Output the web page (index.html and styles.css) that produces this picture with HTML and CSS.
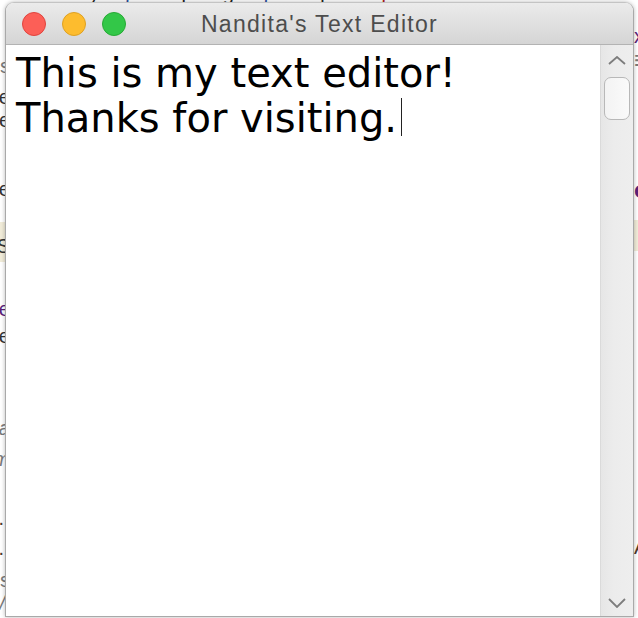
FILE: index.html
```html
<!DOCTYPE html>
<html>
<head>
<meta charset="utf-8">
<title>Nandita's Text Editor</title>
<link rel="stylesheet" href="styles.css">
</head>
<body>
<div class="desktop">
  <div class="bg-top">
    <div class="bg-top-line">n<span class="gap1"></span>y<span class="gap2"></span><span class="blue">j</span><span class="gap3"></span>p<span class="gap4"></span>g<span class="gap5"></span><span class="blue">j</span><span class="gap6"></span>p<span class="gap7"></span><span class="red">j</span></div>
  </div>
  <div class="bg-sides">
    <div class="strip-left">
      <div class="ln l1 gray">is</div>
      <div class="ln l2">the</div>
      <div class="ln l3">are</div>
      <div class="ln l4">one</div>
      <div class="ln l5 hl">IS</div>
      <div class="ln l6 purple">me</div>
      <div class="ln l7">the</div>
      <div class="ln l8 gray it">na</div>
      <div class="ln l9 gray it">om</div>
      <div class="ln l10 brown">.</div>
      <div class="ln l11 brown">.</div>
      <div class="ln l12 gray">s</div>
      <div class="ln l13 gray it">/</div>
    </div>
    <div class="strip-right">
      <div class="rn r1 purple">x</div>
      <div class="rn r2 gray">≡</div>
      <div class="rn r4 purple bold">o</div>
      <div class="rn r5 hl">&nbsp;</div>
      <div class="rn r6 brown">A</div>
    </div>
  </div>

  <div class="window">
    <div class="titlebar">
      <div class="lights">
        <span class="light red-l"></span>
        <span class="light yellow-l"></span>
        <span class="light green-l"></span>
      </div>
      <div class="title">Nandita's Text Editor</div>
      <div class="spacer"></div>
    </div>
    <div class="content">
      <div class="editor">
        <div class="line">This is my text editor!</div>
        <div class="line">Thanks for visiting.<span class="caret"></span></div>
      </div>
      <div class="scrollbar">
        <svg class="chev up" width="18" height="9" viewBox="0 0 18 9"><polyline points="1,8 9,1 17,8" fill="none" stroke="#7d7d7d" stroke-width="1.8"/></svg>
        <div class="thumb"></div>
        <div class="track-fill"></div>
        <svg class="chev down" width="18" height="10" viewBox="0 0 18 10"><polyline points="1,1 9,9 17,1" fill="none" stroke="#7d7d7d" stroke-width="1.8"/></svg>
      </div>
    </div>
  </div>
</div>
</body>
</html>
```

FILE: styles.css
```css
html, body {
  margin: 0;
  padding: 0;
  background: #fff;
}

.desktop {
  position: relative;
  width: 638px;
  height: 618px;
  overflow: hidden;
  background: #ffffff;
  display: flex;
  flex-direction: column;
  font-family: "Liberation Sans", Arial, sans-serif;
}

.bg-top {
  height: 3px;
  overflow: hidden;
  flex: none;
}

.bg-top-line {
  margin-top: -17px;
  font-size: 20px;
  line-height: 20px;
  white-space: nowrap;
  color: #222;
  display: flex;
}

.gap1 { width: 78px; }
.gap2 { width: 26px; }
.gap3 { width: 52px; }
.gap4 { width: 30px; }
.gap5 { width: 30px; }
.gap6 { width: 52px; }
.gap7 { width: 50px; }

.blue { color: #2a4fa0; }
.red { color: #b02020; }

.bg-sides {
  flex: 1;
  display: flex;
  justify-content: space-between;
}

.strip-left {
  width: 10px;
  display: flex;
  flex-direction: column;
  overflow: hidden;
}

.strip-right {
  width: 4px;
  display: flex;
  flex-direction: column;
  overflow: hidden;
}

.ln {
  display: flex;
  justify-content: flex-end;
  white-space: nowrap;
  font-size: 20px;
  line-height: 20px;
  height: 20px;
  color: #333;
  flex: none;
}

.rn {
  display: flex;
  justify-content: flex-start;
  white-space: nowrap;
  font-size: 20px;
  line-height: 20px;
  height: 20px;
  color: #333;
  flex: none;
}

.gray { color: #7a7a7a; }
.purple { color: #5b1f7a; }
.brown { color: #4e3a2c; }
.it { font-style: italic; }
.bold { font-weight: bold; font-size: 24px; }
.hl { background: #f1ecd9; }

.l1 { margin-top: 53px; }
.l2 { margin-top: 11px; }
.l3 { margin-top: 3px; }
.l4 { margin-top: 49px; }
.l5 { margin-top: 23px; height: 20px; padding: 14px 0 6px; }
.l6 { margin-top: 37px; }
.l7 { margin-top: 7px; }
.l8 { margin-top: 72px; }
.l9 { margin-top: 11px; }
.l10 { margin-top: 39px; padding-right: 6px; }
.l11 { margin-top: 10px; padding-right: 6px; }
.l12 { margin-top: 12px; }
.l13 { margin-top: 3px; padding-right: 5px; }

.r1 { margin-top: 23px; }
.r2 { margin-top: 4px; font-size: 26px; }
.r4 { margin-top: 110px; }
.r5 { margin-top: 20px; height: 31px; }
.r6 { margin-top: 286px; }

/* window */
.window {
  position: absolute;
  left: 5px;
  top: 2px;
  width: 629px;
  height: 615px;
  box-sizing: border-box;
  border: 1px solid #a9a9a9;
  border-top-color: #c4c4c4;
  border-radius: 9px 9px 0 0;
  background: #fff;
  display: flex;
  flex-direction: column;
  overflow: hidden;
  box-shadow: 0 0 4px rgba(0, 0, 0, 0.28);
}

.titlebar {
  flex: none;
  height: 42px;
  box-sizing: border-box;
  border-bottom: 1px solid #b3b3b3;
  background: linear-gradient(#ebebeb, #d5d5d5);
  display: grid;
  grid-template-columns: 1fr auto 1fr;
  align-items: center;
}

.lights {
  display: flex;
  gap: 16px;
  padding-left: 16px;
}

.light {
  display: block;
  width: 24px;
  height: 24px;
  box-sizing: border-box;
  border-radius: 50%;
}

.red-l { background: #fc5f57; border: 1px solid #e0443e; }
.yellow-l { background: #fdbc2e; border: 1px solid #dea123; }
.green-l { background: #33c748; border: 1px solid #27aa35; }

.title {
  font-family: "Liberation Sans", Arial, sans-serif;
  font-size: 23px;
  letter-spacing: 1.3px;
  color: #4d4d4d;
  white-space: nowrap;
  padding-top: 1px;
}

.content {
  flex: 1;
  display: flex;
  min-height: 0;
}

.editor {
  flex: 1;
  padding: 6px 0 0 10px;
  font-family: "DejaVu Sans", Verdana, sans-serif;
  font-size: 40px;
  line-height: 45px;
  color: #000;
}

.line {
  white-space: nowrap;
}

.caret {
  display: inline-block;
  width: 1px;
  height: 38px;
  background: #222;
  margin-left: 4px;
  vertical-align: -4px;
}

.scrollbar {
  flex: none;
  width: 33px;
  box-sizing: border-box;
  border-left: 1px solid #dadada;
  background: linear-gradient(to right, #e6e6e6, #ececec 40%, #eeeeee);
  display: flex;
  flex-direction: column;
  align-items: center;
  padding-top: 11px;
  padding-bottom: 8px;
}

.chev {
  display: block;
  flex: none;
}

.thumb {
  margin-top: 12px;
  width: 26px;
  height: 43px;
  box-sizing: border-box;
  border: 1.5px solid #b8b8b8;
  border-radius: 7px;
  background: linear-gradient(to right, #f3f3f3, #fafafa);
  flex: none;
}

.track-fill {
  flex: 1;
}
```
